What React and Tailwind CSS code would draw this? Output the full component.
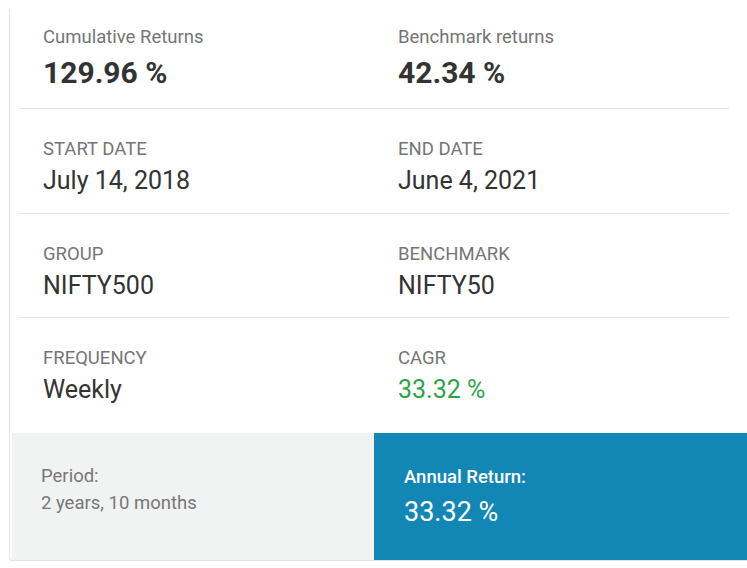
import React from 'react'

const rows = [
  {
    cells: [
      { label: 'Cumulative Returns', value: '129.96 %' },
      { label: 'Benchmark returns', value: '42.34 %' },
    ],
    bold: true,
  },
  {
    cells: [
      { label: 'START DATE', value: 'July 14, 2018' },
      { label: 'END DATE', value: 'June 4, 2021' },
    ],
  },
  {
    cells: [
      { label: 'GROUP', value: 'NIFTY500' },
      { label: 'BENCHMARK', value: 'NIFTY50' },
    ],
  },
  {
    cells: [
      { label: 'FREQUENCY', value: 'Weekly' },
      { label: 'CAGR', value: '33.32 %', green: true },
    ],
    last: true,
  },
]

function Cell({ label, value, bold, green }) {
  return (
    <div className="pl-6">
      <div className="text-[18.5px] leading-[22px] text-[#757575]">{label}</div>
      {bold ? (
        <div className="mt-[8px] text-[30px] leading-[34px] font-bold text-[#333333]">{value}</div>
      ) : (
        <div
          className={`mt-[6px] text-[25px] leading-[30px] ${green ? 'text-[#2fa24b]' : 'text-[#333333]'}`}
        >
          {value}
        </div>
      )}
    </div>
  )
}

export default function App() {
  return (
    <div className="w-[747px] h-[568px] overflow-hidden bg-white" style={{ fontFamily: 'Roboto, "Liberation Sans", sans-serif' }}>
      <div className="mt-[9px] ml-[9px] w-[760px] border-l border-b border-[#e3e3e3] rounded-bl-[3px]">
        {rows.map((row, i) => (
          <div
            key={i}
            className={`ml-[9px] w-[710px] grid grid-cols-2 ${
              row.bold ? 'pt-[17px] pb-[18px]' : row.last ? 'pt-[29px] pb-[28px]' : i === 2 ? 'pt-[29px] pb-[16px]' : 'pt-[29px] pb-[17px]'
            } ${row.last ? '' : 'border-b border-[#e3e3e3]'}`}
          >
            {row.cells.map((c) => (
              <Cell key={c.label} {...c} bold={row.bold} />
            ))}
          </div>
        ))}
        <div className="flex ml-[2px] h-[127px]">
          <div className="w-[362px] bg-[#f1f2f2] pl-[29px] pt-[30px] text-[18.5px] leading-[27px] text-[#777777]">
            <div>Period:</div>
            <div>2 years, 10 months</div>
          </div>
          <div className="flex-1 bg-[#1287b6] pl-[30px] pt-[33px] text-white">
            <div className="text-[18.5px] leading-[22px] font-medium">Annual Return:</div>
            <div className="mt-[8px] text-[27px] leading-[32px]">33.32 %</div>
          </div>
        </div>
      </div>
    </div>
  )
}
